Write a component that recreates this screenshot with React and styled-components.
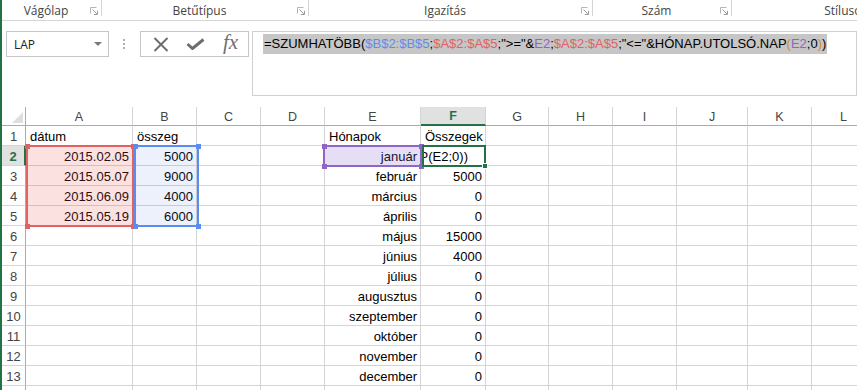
import React from "react";
import styled, { createGlobalStyle } from "styled-components";

const GlobalStyle = createGlobalStyle`
  html, body { margin: 0; padding: 0; background: #fff; overflow: hidden; }
  * { box-sizing: border-box; }
`;

const Frame = styled.div`
  width: 857px;
  height: 390px;
  overflow: hidden;
  background: #fff;
  border-left: 2px solid #217346;
  font-family: "Liberation Sans", Arial, sans-serif;
`;

const RibbonBar = styled.div`
  display: flex;
  height: 21px;
  border-bottom: 1px solid #d5d5d5;
  overflow: hidden;
`;

const RibbonGroup = styled.div`
  position: relative;
  flex: 0 0 ${(p) => p.$w}px;
  display: flex;
  align-items: center;
  padding-right: 4px;
  &::after {
    content: "";
    position: absolute;
    right: 0;
    top: 0;
    height: 16px;
    border-right: 1px solid #d5d5d5;
  }
`;

const GroupLabel = styled.span`
  flex: 1;
  text-align: center;
  font-family: "Open Sans", "Noto Sans", sans-serif;
  font-size: 12px;
  color: #444;
  padding-right: ${(p) => p.$pr || 0}px;
  white-space: nowrap;
`;

const Launcher = () => (
  <svg width="8" height="8" viewBox="0 0 8 8" style={{ flex: "0 0 8px", marginTop: 2 }}>
    <path d="M0.5 6.5V0.5H6.5" stroke="#b5b5b5" fill="none" />
    <path d="M2.5 2.5L6.8 6.8M7.5 3.8V7.5H3.8" stroke="#9a9a9a" fill="none" />
  </svg>
);

const FormulaRow = styled.div`
  display: flex;
  align-items: flex-start;
  padding: 10px 0 0 4px;
  height: 86px;
`;

const NameBox = styled.div`
  width: 105px;
  height: 26px;
  border: 1px solid #c6c6c6;
  display: flex;
  align-items: center;
  justify-content: space-between;
  padding: 0 6px 0 7px;
`;

const NameText = styled.span`
  font-family: "Open Sans", "Noto Sans", sans-serif;
  font-size: 12px;
  color: #222;
`;

const DropArrow = styled.span`
  width: 0;
  height: 0;
  border-left: 4px solid transparent;
  border-right: 4px solid transparent;
  border-top: 4px solid #7a7a7a;
`;

const Grip = styled.div`
  width: 32px;
  height: 26px;
  display: flex;
  flex-direction: column;
  align-items: center;
  justify-content: center;
  gap: 2px;
  & > i {
    display: block;
    width: 2px;
    height: 2px;
    background: #b0b0b0;
  }
`;

const FxBox = styled.div`
  width: 109px;
  height: 26px;
  border: 1px solid #c6c6c6;
  display: flex;
  align-items: center;
  padding-left: 2px;
`;

const FxSlot = styled.div`
  flex: 0 0 35px;
  display: flex;
  align-items: center;
  justify-content: center;
  height: 100%;
`;

const FxText = styled.span`
  font-family: "Liberation Serif", "Times New Roman", serif;
  font-style: italic;
  font-size: 21px;
  color: #707070;
  line-height: 1;
  margin-top: -3px;
`;

const FormulaBox = styled.div`
  margin-left: 3px;
  width: 620px;
  height: 65px;
  border: 1px solid #d0d0d0;
  padding: 2px 0 0 10px;
`;

const FormulaText = styled.span`
  display: inline-block;
  background: #c6c6c6;
  font-size: 13px;
  line-height: 20px;
  height: 20px;
  padding: 0 1px;
  color: #000;
  white-space: nowrap;
`;

const Tok = styled.span`
  color: ${(p) => p.$c || "#000"};
`;

const Sheet = styled.div`
  position: relative;
  display: grid;
  grid-template-columns: ${(p) => p.$cols};
  grid-template-rows: 19px repeat(14, 20px);
  margin-top: 0;
`;

const Corner = styled.div`
  position: relative;
  border-right: 1px solid #ababab;
  border-bottom: 1px solid #ababab;
  &::after {
    content: "";
    position: absolute;
    right: 2px;
    bottom: 2px;
    width: 0;
    height: 0;
    border-left: 11px solid transparent;
    border-bottom: 11px solid #dfdfdf;
  }
`;

const ColHeader = styled.div`
  display: flex;
  align-items: center;
  justify-content: center;
  font-size: 12.5px;
  color: ${(p) => (p.$sel ? "#217346" : "#444")};
  font-weight: ${(p) => (p.$sel ? 700 : 400)};
  background: ${(p) => (p.$sel ? "#e1e1e1" : "#fff")};
  border-right: 1px solid #d4d4d4;
  border-bottom: ${(p) => (p.$sel ? "2px solid #217346" : "1px solid #ababab")};
  padding-top: 1px;
`;

const RowHeader = styled.div`
  display: flex;
  align-items: center;
  justify-content: center;
  font-size: 13px;
  padding-top: 1px;
  color: ${(p) => (p.$sel ? "#217346" : "#444")};
  font-weight: ${(p) => (p.$sel ? 700 : 400)};
  background: ${(p) => (p.$sel ? "#e1e1e1" : "#fff")};
  border-right: ${(p) => (p.$sel ? "2px solid #217346" : "1px solid #ababab")};
  border-bottom: 1px solid #d4d4d4;
`;

const Cell = styled.div`
  display: flex;
  align-items: center;
  justify-content: ${(p) => (p.$align === "right" ? "flex-end" : "flex-start")};
  padding: 2px ${(p) => p.$pr ?? 3}px 0 4px;
  font-size: 13px;
  color: #000;
  white-space: nowrap;
  overflow: hidden;
  border-right: 1px solid #d4d4d4;
  border-bottom: 1px solid #d4d4d4;
`;

const RangeBox = styled.div`
  position: absolute;
  pointer-events: none;
  border: 2px solid ${(p) => p.$c};
  background: ${(p) => p.$fill || "transparent"};
`;

const Handle = styled.span`
  position: absolute;
  width: 5px;
  height: 5px;
  background: ${(p) => p.$c};
  ${(p) => (p.$v === "t" ? "top: -3.5px;" : "bottom: -3.5px;")}
  ${(p) => (p.$h === "l" ? "left: -3.5px;" : "right: -3.5px;")}
`;

const FillHandle = styled.span`
  position: absolute;
  right: -4px;
  bottom: -4px;
  width: 6px;
  height: 6px;
  background: #217346;
  border: 1px solid #fff;
`;

const cols = [
  { l: "A", w: 107 },
  { l: "B", w: 64 },
  { l: "C", w: 64 },
  { l: "D", w: 64 },
  { l: "E", w: 96 },
  { l: "F", w: 65 },
  { l: "G", w: 63 },
  { l: "H", w: 64 },
  { l: "I", w: 64 },
  { l: "J", w: 71 },
  { l: "K", w: 64 },
  { l: "L", w: 64 },
];

const months = [
  "január", "február", "március", "április", "május", "június",
  "július", "augusztus", "szeptember", "október", "november", "december",
];
const sums = [null, "5000", "0", "0", "15000", "4000", "0", "0", "0", "0", "0", "0"];

const data = {
  A1: { t: "dátum" },
  B1: { t: "összeg" },
  E1: { t: "Hónapok" },
  F1: { t: "Összegek" },
  A2: { t: "2015.02.05", r: 1 },
  A3: { t: "2015.05.07", r: 1 },
  A4: { t: "2015.06.09", r: 1 },
  A5: { t: "2015.05.19", r: 1 },
  B2: { t: "5000", r: 1 },
  B3: { t: "9000", r: 1 },
  B4: { t: "4000", r: 1 },
  B5: { t: "6000", r: 1 },
  F2: { t: "NAP(E2;0))", r: 1, pr: 17 },
};
months.forEach((m, i) => {
  data[`E${i + 2}`] = { t: m, r: 1 };
  if (sums[i]) data[`F${i + 2}`] = { t: sums[i], r: 1 };
});

const RED = "#e06262";
const BLUE = "#5b8def";
const PURPLE = "#8f65c8";
const PAREN = "#c9902c";

const Corners = ({ c }) => (
  <>
    <Handle $c={c} $v="t" $h="l" />
    <Handle $c={c} $v="t" $h="r" />
    <Handle $c={c} $v="b" $h="l" />
    <Handle $c={c} $v="b" $h="r" />
  </>
);

export default function App() {
  const template = ["24px", ...cols.map((c) => `${c.w}px`)].join(" ");
  const rows = Array.from({ length: 14 }, (_, i) => i + 1);
  return (
    <Frame>
      <GlobalStyle />
      <RibbonBar>
        <RibbonGroup $w={100}>
          <GroupLabel>Vágólap</GroupLabel>
          <Launcher />
        </RibbonGroup>
        <RibbonGroup $w={207}>
          <GroupLabel>Betűtípus</GroupLabel>
          <Launcher />
        </RibbonGroup>
        <RibbonGroup $w={284}>
          <GroupLabel>Igazítás</GroupLabel>
          <Launcher />
        </RibbonGroup>
        <RibbonGroup $w={139}>
          <GroupLabel>Szám</GroupLabel>
          <Launcher />
        </RibbonGroup>
        <RibbonGroup $w={240}>
          <GroupLabel>Stílusok</GroupLabel>
          <Launcher />
        </RibbonGroup>
      </RibbonBar>

      <FormulaRow>
        <NameBox>
          <NameText>LAP</NameText>
          <DropArrow />
        </NameBox>
        <Grip>
          <i />
          <i />
          <i />
        </Grip>
        <FxBox>
          <FxSlot>
            <svg width="16" height="15" viewBox="0 0 16 15">
              <path d="M1.5 1L14.5 14M14.5 1L1.5 14" stroke="#6e6e6e" strokeWidth="2" fill="none" />
            </svg>
          </FxSlot>
          <FxSlot>
            <svg width="19" height="12" viewBox="0 0 19 12">
              <path d="M1.5 6L6.5 10.5L17.5 1.5" stroke="#6e6e6e" strokeWidth="3" fill="none" strokeLinejoin="miter" />
            </svg>
          </FxSlot>
          <FxSlot>
            <FxText>fx</FxText>
          </FxSlot>
        </FxBox>
        <FormulaBox>
          <FormulaText>
            <Tok>=SZUMHATÖBB(</Tok>
            <Tok $c={BLUE}>$B$2:$B$5</Tok>
            <Tok>;</Tok>
            <Tok $c={RED}>$A$2:$A$5</Tok>
            <Tok>;"&gt;="&amp;</Tok>
            <Tok $c={PURPLE}>E2</Tok>
            <Tok>;</Tok>
            <Tok $c={RED}>$A$2:$A$5</Tok>
            <Tok>;"&lt;="&amp;HÓNAP.UTOLSÓ.NAP</Tok>
            <Tok $c={PAREN}>(</Tok>
            <Tok $c={PURPLE}>E2</Tok>
            <Tok>;0</Tok>
            <Tok $c={PAREN}>)</Tok>
            <Tok>)</Tok>
          </FormulaText>
        </FormulaBox>
      </FormulaRow>

      <Sheet $cols={template}>
        <Corner />
        {cols.map((c) => (
          <ColHeader key={c.l} $sel={c.l === "F"}>
            {c.l}
          </ColHeader>
        ))}
        {rows.map((r) => (
          <React.Fragment key={r}>
            <RowHeader $sel={r === 2}>{r}</RowHeader>
            {cols.map((c) => {
              const d = data[`${c.l}${r}`];
              return (
                <Cell key={c.l} $align={d && d.r ? "right" : "left"} $pr={d && d.pr}>
                  {d ? d.t : ""}
                </Cell>
              );
            })}
          </React.Fragment>
        ))}

        <RangeBox $c={RED} $fill="rgba(240, 90, 90, 0.18)" style={{ left: 24, top: 38, width: 108, height: 82 }}>
          <Corners c={RED} />
        </RangeBox>
        <RangeBox $c={BLUE} $fill="rgba(80, 130, 230, 0.11)" style={{ left: 132, top: 38, width: 65, height: 82 }}>
          <Corners c={BLUE} />
        </RangeBox>
        <RangeBox $c={PURPLE} $fill="rgba(130, 90, 200, 0.2)" style={{ left: 321, top: 38, width: 99, height: 22 }}>
          <Corners c={PURPLE} />
        </RangeBox>
        <RangeBox $c="#217346" style={{ left: 420, top: 38, width: 64, height: 22 }}>
          <FillHandle />
        </RangeBox>
      </Sheet>
    </Frame>
  );
}
